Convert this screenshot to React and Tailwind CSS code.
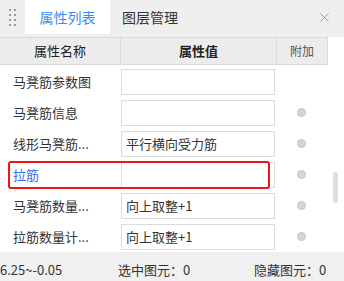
import { X } from 'lucide-react';

const ROWS = [
  { name: '马凳筋参数图', value: '', dot: false },
  { name: '马凳筋信息', value: '', dot: true },
  { name: '线形马凳筋...', value: '平行横向受力筋', dot: true },
  { name: '拉筋', value: '', dot: true, blue: true },
  { name: '马凳筋数量...', value: '向上取整+1', dot: true },
  { name: '拉筋数量计...', value: '向上取整+1', dot: true },
];

const font = { fontFamily: '"Noto Sans CJK SC", "Noto Sans", sans-serif' };

export default function App() {
  return (
    <div className="relative w-[344px] h-[281px] overflow-hidden bg-white flex flex-col text-[13px] text-[#333]" style={font}>
      {/* tabs */}
      <div className="h-[34px] bg-[#efefef] flex items-stretch shrink-0">
        <div className="w-[25px] flex items-center justify-center">
          <div className="grid grid-cols-2 gap-x-[3px] gap-y-[3px]">
            {Array.from({ length: 8 }).map((_, i) => (
              <span key={i} className="w-[2px] h-[2px] bg-[#9a9a9a]" />
            ))}
          </div>
        </div>
        <div className="w-[85px] bg-white flex items-center justify-center text-[#3d88f2] text-[14px]">属性列表</div>
        <div className="px-[12px] flex items-center text-[14px] text-[#333]">图层管理</div>
        <div className="ml-auto w-[40px] flex items-center justify-center text-[#999]">
          <X size={15} strokeWidth={1.4} />
        </div>
      </div>
      <div className="h-[3px] bg-[#efefef] shrink-0" />

      {/* header */}
      <div className="h-[28px] flex shrink-0 bg-white">
        <div className="w-[121px] bg-[#ececec] border-y border-r border-[#dadada] flex items-center justify-center text-[#222]">属性名称</div>
        <div className="w-[156px] bg-[#ececec] border-y border-r border-[#dadada] flex items-center justify-center font-semibold text-[#222]">属性值</div>
        <div className="w-[51px] bg-[#ececec] border-y border-r border-[#dadada] flex items-center justify-center text-[12px] text-[#555]">附加</div>
      </div>

      {/* body */}
      <div className="flex-1 relative pt-[1px]">
        {ROWS.map((r, i) => (
          <div key={i} className="h-[31px] flex items-center">
            <div className={`w-[121px] pl-[13px] pr-[4px] truncate ${r.blue ? 'text-[#2f67f0]' : 'text-[#333]'}`}>{r.name}</div>
            <div className="w-[154px] h-[26px] border border-[#dcdcdc] bg-white flex items-center px-[4px] truncate">{r.value}</div>
            <div className="w-[53px] flex items-center justify-center">
              {r.dot && <span className="w-[9px] h-[9px] rounded-full bg-[#d6d6d6] border border-[#c6c6c6]" />}
            </div>
          </div>
        ))}
        <div className="absolute left-[333px] top-[107px] w-[5px] h-[31px] rounded-full bg-[#dedede]" />
        <div className="absolute left-[8px] top-[96px] w-[262px] h-[28px] border-2 border-[#f01414] rounded-[3px]" />
      </div>

      {/* status */}
      <div className="h-[29px] bg-[#f0f0f0] shrink-0 relative text-[#333]">
        <span className="absolute left-[0px] top-[8px]">6.25~-0.05</span>
        <span className="absolute left-[118px] top-[8px]">选中图元：0</span>
        <span className="absolute left-[254px] top-[8px]">隐藏图元：0</span>
      </div>
    </div>
  );
}
